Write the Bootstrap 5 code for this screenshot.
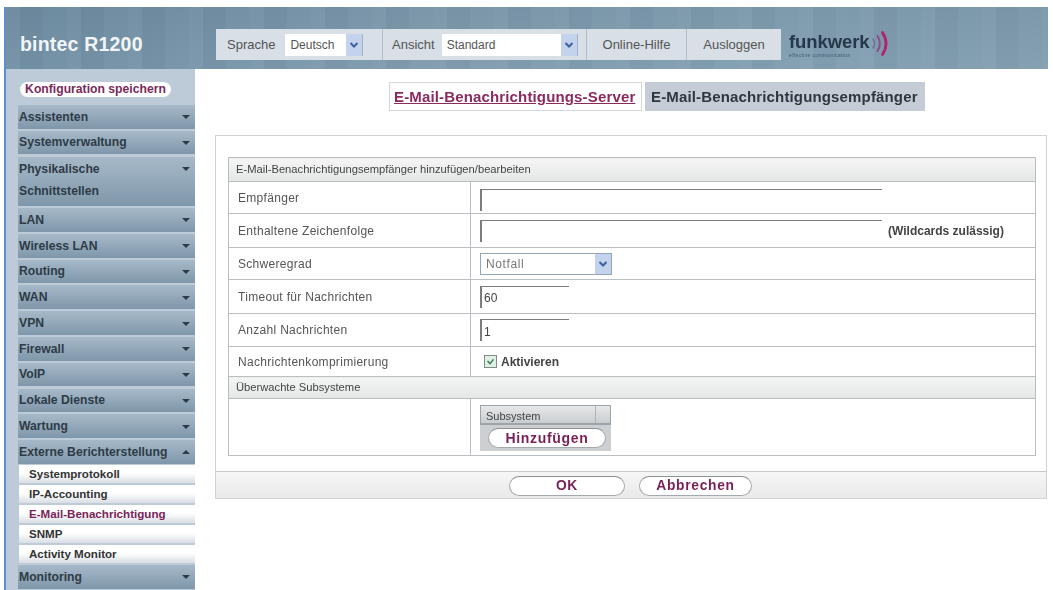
<!DOCTYPE html>
<html lang="de">
<head>
  <meta charset="UTF-8">
  <meta name="viewport" content="width=device-width, initial-scale=1.0">
  <title>bintec R1200</title>
  <link href="https://cdn.jsdelivr.net/npm/bootstrap@5.3.2/dist/css/bootstrap.min.css" rel="stylesheet">
  <style>
    html, body { height: 590px; overflow: hidden; background: #fff; }
    body { font-family: "Liberation Sans", Arial, sans-serif; color: #333; padding: 7px 5px 0 4px; }
    .shell { border-left: 2px solid #5b8fd0; height: 583px; filter: blur(.55px); }

    /* header */
    .top-bar { height: 62px; padding-top: 22px;
      background:
        repeating-linear-gradient(90deg, rgba(255,255,255,.035) 0 14px, rgba(0,0,0,.02) 14px 37px, rgba(255,255,255,.015) 37px 61px),
        linear-gradient(rgba(0,0,0,.03), rgba(255,255,255,.03)),
        linear-gradient(90deg, #6e8da3 0, #7d99ad 40%, #7f9db0 75%, #7f9cae 100%); }
    .brand { width: 210px; padding-left: 14px; height: 31px; line-height: 31px; color: #f2f5f7; font-size: 19.5px; font-weight: 700; letter-spacing: .2px; white-space: nowrap; }
    .tool { height: 31px; background: #d8dfe6; color: #555; font-size: 13px; border-right: 1px solid #aebdc9; padding: 0 7px; }
    .tool-lang { width: 167px; padding-left: 11px; gap: 10px; }
    .tool-view { width: 204px; padding-left: 9px; gap: 7px; }
    .tool-help { width: 100px; justify-content: center; }
    .tool-out { width: 94px; justify-content: center; border-right: 0; }
    .logo { margin-left: 8px; width: 110px; height: 36px; color: #24384a; line-height: 1; padding-top: 4px; position: relative; }
    .logo b { font-size: 18.5px; letter-spacing: -.1px; }
    .logo small { display: block; font-size: 5px; letter-spacing: .35px; color: #3e5a70; margin-top: 1px; }
    .logo svg { position: absolute; left: 81px; top: 1px; }

    select.pick { appearance: none; height: 22px; padding: 0 0 0 5px; font-size: 12px; color: #555; background-color: #fff; border: 0; border-right: 1px solid #9fb2c6; border-radius: 0;
      background-image: url("data:image/svg+xml,%3Csvg xmlns='http://www.w3.org/2000/svg' width='16' height='22'%3E%3Crect width='16' height='22' fill='%23c3d3ee'/%3E%3Cpath d='M4.500 9l3.500 3.500L11.500 9' fill='none' stroke='%233f5f9f' stroke-width='2'/%3E%3C/svg%3E");
      background-repeat: no-repeat; background-position: right center; }
    .pick-lang { width: 78px; background-color: #eef1f4; }
    .pick-view { width: 136px; border-left: 1px solid #9fb2c6; }
    select.pick-level { width: 132px; height: 22px; border: 1px solid #94a5b5; color: #777; font-size: 12px; letter-spacing: .6px; }

    /* sidebar */
    .side { width: 189px; height: 521px; background: #bccbd7; padding: 0 0 0 12px; overflow: hidden; flex: none; }
    .save { display: block; width: 151px; height: 15px; line-height: 15px; margin: 13px 0 8px 2px; border-radius: 8px; background: #fff; color: #7b2a58; font-size: 12.200px; font-weight: 700; text-align: center; white-space: nowrap; text-decoration: none; }
    .menu-item { display: flex; align-items: center; justify-content: space-between; height: 23.600px; margin-bottom: 2.200px; padding: 0 5px 0 1px; color: #2e3b46; font-size: 12.200px; font-weight: 700;
      background: linear-gradient(#a6b9c9, #7f97aa); white-space: nowrap; }
    .menu-item.tall { height: 49.400px; align-items: flex-start; padding-top: 1px; line-height: 22px; }
    .menu-item i { border: 4px solid transparent; border-top: 4px solid #2e3b46; border-bottom: 0; margin-top: 1px; }
    .menu-item.tall i { margin-top: 9px; }
    .menu-item.open i { border-top: 0; border-bottom: 4px solid #2e3b46; }
    .sub-item { display: block; height: 18.400px; line-height: 18px; margin: 0 0 1.600px 1px; padding-left: 10px; color: #333; font-size: 11.600px; font-weight: 700; background: linear-gradient(#fff 45%, #d9dee3); text-decoration: none; white-space: nowrap; }
    .sub-item.on { color: #7b1f58; }
    .sub-list { padding-top: 1px; margin-bottom: 2px; }

    /* content */
    .main { flex: 1; min-width: 0; padding: 13px 0 0 20px; }
    .tabs { gap: 3px; padding-left: 174px; height: 29px; margin-bottom: 24px; }
    .tab-link { height: 29px; line-height: 27px; font-size: 15px; font-weight: 700; padding: 0 4px; text-decoration: none; letter-spacing: .15px; white-space: nowrap; }
    .tab-link.on { width: 253px; background: #fff; border: 1px solid #d5d7da; color: #8a2a5e; }
    .tab-link.off { width: 280px; background: #c6ccd6; color: #2e3640; padding-left: 6px; line-height: 29px; }
    .panel { width: 832px; height: 364px; border: 1px solid #d0d3d5; background: #fff; padding: 21px 10px 0 12px; display: flex; flex-direction: column; }
    .form-tbl { width: 808px; margin: 0; table-layout: fixed; border-collapse: collapse; font-size: 12px; color: #555; --bs-table-bg: transparent; }
    .form-tbl col.c1 { width: 242px; }
    .form-tbl td { border: 1px solid #b8bec2; padding: 0 0 0 5px; vertical-align: middle; }
    .form-tbl td.lbl { letter-spacing: .3px; padding-left: 9px; }
    .form-tbl .head td { background: linear-gradient(#f5f5f5, #e4e6e6); color: #444; font-size: 11.200px; letter-spacing: 0; padding-left: 7px; }
    .field { display: block; height: 22px; border: 0; border-top: 1px solid #7c7c7c; border-left: 2px solid #7c7c7c; background: transparent; padding: 2px 0 0 2px; font-size: 12px; color: #444; border-radius: 0; }
    .field:focus { outline: 0; box-shadow: none; }
    .field-long { width: 402px; }
    .field-short { width: 89px; }
    .hint { font-size: 12px; font-weight: 700; color: #444; padding-left: 6px; white-space: nowrap; }
    .check { width: 13px; height: 13px; background: #dff0e4; border: 1px solid #7e8b86; color: #3e7d57; flex: none; }
    .sys-box { width: 131px; height: 46px; background: #ccd0d3; margin-top: 1px; padding-bottom: 1px; }
    .sys-head { height: 20px; line-height: 20px; padding-left: 5px; font-size: 11px; color: #444; background: linear-gradient(#e6e8e9, #c9cdd0); border: 1px solid #9da4a9; border-bottom: 2px solid #9da4a9; position: relative; }
    .sys-head::after { content: ""; position: absolute; top: 0; right: 14px; height: 100%; border-left: 1px solid #adb3b7; }
    .pill { display: inline-block; background: #fff; border: 1px solid #a4a9ad; border-top-color: #8b9094; border-radius: 12px; color: #7a1f56; font-weight: 700; text-align: center; padding: 0; text-decoration: none; white-space: nowrap; }
    .pill-add { display: block; width: 118px; height: 20px; line-height: 18px; margin: 3px 0 0 8px; font-size: 14px; letter-spacing: .7px; }
    .foot { height: 28px; margin: 15px -10px 0 -12px; background: linear-gradient(#f6f6f6, #e9e9e9); border-top: 1px solid #c6c9cb; gap: 14px; padding: 4px 0 0 293px; }
    .pill-foot { height: 20px; line-height: 18px; font-size: 13.800px; letter-spacing: .7px; }
    .pill-ok { width: 116px; }
    .pill-cancel { width: 113px; }
  </style>
</head>
<body>

<div class="shell">
  <div class="top-bar d-flex align-items-start">
    <div class="brand">bintec R1200</div>
    <div class="tool tool-lang d-flex align-items-center"><span>Sprache</span><select class="pick pick-lang"><option>Deutsch</option></select></div>
    <div class="tool tool-view d-flex align-items-center"><span>Ansicht</span><select class="pick pick-view"><option>Standard</option></select></div>
    <div class="tool tool-help d-flex align-items-center">Online-Hilfe</div>
    <div class="tool tool-out d-flex align-items-center">Ausloggen</div>
    <div class="logo"><b>funkwerk</b><svg width="19" height="27" viewBox="0 0 19 27" fill="none" stroke="#b0246f" stroke-linecap="round"><path d="M3 9c2 3 2 6 0 9" stroke-width="1.500" stroke="#6d6f94"/><path d="M7.500 6c3 4.500 3 10.500 0 15" stroke-width="2" stroke="#8d4a86"/><path d="M12.500 2.500c4.500 7 4.500 15 0 22" stroke-width="2.800"/></svg><small>effective communication</small></div>
  </div>

  <div class="d-flex">
    <nav class="side">
      <a class="save" href="#">Konfiguration speichern</a>
      <div class="menu-item"><span>Assistenten</span><i></i></div>
      <div class="menu-item"><span>Systemverwaltung</span><i></i></div>
      <div class="menu-item tall"><span>Physikalische<br>Schnittstellen</span><i></i></div>
      <div class="menu-item"><span>LAN</span><i></i></div>
      <div class="menu-item"><span>Wireless LAN</span><i></i></div>
      <div class="menu-item"><span>Routing</span><i></i></div>
      <div class="menu-item"><span>WAN</span><i></i></div>
      <div class="menu-item"><span>VPN</span><i></i></div>
      <div class="menu-item"><span>Firewall</span><i></i></div>
      <div class="menu-item"><span>VoIP</span><i></i></div>
      <div class="menu-item"><span>Lokale Dienste</span><i></i></div>
      <div class="menu-item"><span>Wartung</span><i></i></div>
      <div class="menu-item open mb-0"><span>Externe Berichterstellung</span><i></i></div>
      <div class="sub-list">
        <a class="sub-item" href="#">Systemprotokoll</a>
        <a class="sub-item" href="#">IP-Accounting</a>
        <a class="sub-item on" href="#">E-Mail-Benachrichtigung</a>
        <a class="sub-item" href="#">SNMP</a>
        <a class="sub-item" href="#">Activity Monitor</a>
      </div>
      <div class="menu-item"><span>Monitoring</span><i></i></div>
    </nav>

    <main class="main">
      <div class="tabs d-flex">
        <a class="tab-link on" href="#"><u>E-Mail-Benachrichtigungs-Server</u></a>
        <a class="tab-link off" href="#">E-Mail-Benachrichtigungsempfänger</a>
      </div>

      <div class="panel">
        <table class="form-tbl">
          <colgroup><col class="c1"><col></colgroup>
          <tr class="head" style="height:24px"><td colspan="2">E-Mail-Benachrichtigungsempfänger hinzufügen/bearbeiten</td></tr>
          <tr style="height:32px"><td class="lbl">Empfänger</td><td><input class="field field-long mt-1 ms-1" type="text"></td></tr>
          <tr style="height:34px"><td class="lbl">Enthaltene Zeichenfolge</td><td><div class="d-flex align-items-center"><input class="field field-long ms-1" type="text"><span class="hint">(Wildcards zulässig)</span></div></td></tr>
          <tr style="height:32px"><td class="lbl">Schweregrad</td><td><select class="pick pick-level ms-1"><option>Notfall</option></select></td></tr>
          <tr style="height:34px"><td class="lbl">Timeout für Nachrichten</td><td><input class="field field-short ms-1" type="text" value="60"></td></tr>
          <tr style="height:33px"><td class="lbl">Anzahl Nachrichten</td><td><input class="field field-short ms-1" type="text" value="1"></td></tr>
          <tr style="height:30px"><td class="lbl">Nachrichtenkomprimierung</td><td><div class="d-flex align-items-center gap-1 ms-2"><svg class="check" viewBox="0 0 13 13"><path d="M3 6l3 3 4-5" fill="none" stroke="currentColor" stroke-width="1.800"/></svg><span class="hint ps-0">Aktivieren</span></div></td></tr>
          <tr class="head" style="height:22px"><td colspan="2">Überwachte Subsysteme</td></tr>
          <tr style="height:57px"><td class="lbl"></td><td><div class="sys-box ms-1"><div class="sys-head">Subsystem</div><a class="pill pill-add" href="#">Hinzufügen</a></div></td></tr>
        </table>
        <div class="foot d-flex">
          <a class="pill pill-foot pill-ok" href="#">OK</a>
          <a class="pill pill-foot pill-cancel" href="#">Abbrechen</a>
        </div>
      </div>
    </main>
  </div>
</div>

<script src="https://cdn.jsdelivr.net/npm/bootstrap@5.3.2/dist/js/bootstrap.bundle.min.js"></script>
</body>
</html>
